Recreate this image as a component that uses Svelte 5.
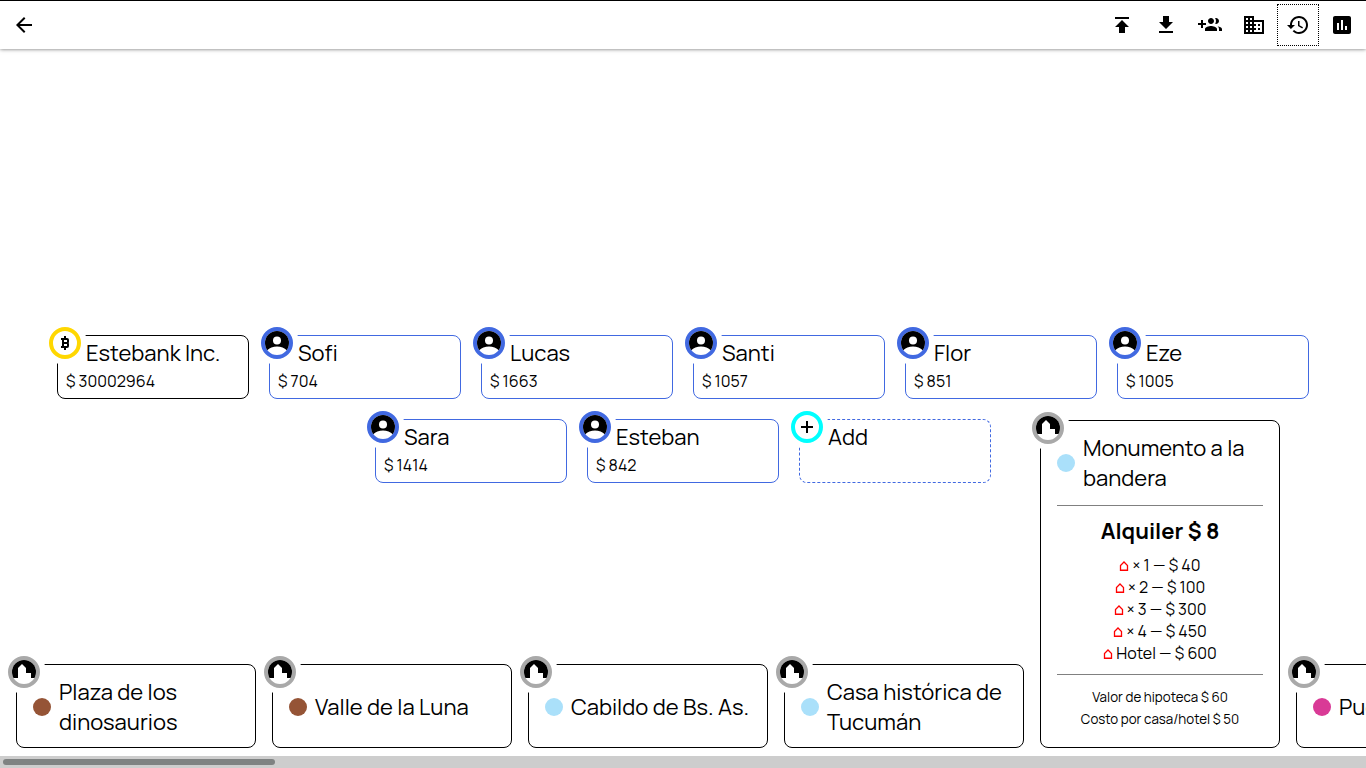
<script>
  const actions = [
    { label: 'Importar', d: 'M5 4v2h14V4H5zm0 10h4v6h6v-6h4l-7-7-7 7z' },
    { label: 'Exportar', d: 'M19 9h-4V3H9v6H5l7 7 7-7zM5 18v2h14v-2H5z' },
    { label: 'Agregar jugadores', d: 'M8 10H5V7H3v3H0v2h3v3h2v-3h3v-2zm10 1c1.66 0 2.99-1.34 2.99-3S19.66 5 18 5c-.32 0-.63.05-.91.14.57.81.9 1.79.9 2.86s-.34 2.04-.9 2.86c.28.09.59.14.91.14zm-5 0c1.66 0 2.99-1.34 2.99-3S14.66 5 13 5c-1.66 0-3 1.34-3 3s1.34 3 3 3zm6.62 2.16c.83.73 1.38 1.66 1.38 2.84v2h3v-2c0-1.54-2.37-2.49-4.38-2.84zM13 13c-2 0-6 1-6 3v2h12v-2c0-2-4-3-6-3z' },
    { label: 'Propiedades', d: 'M12 7V3H2v18h20V7H12zM6 19H4v-2h2v2zm0-4H4v-2h2v2zm0-4H4V9h2v2zm0-4H4V5h2v2zm4 12H8v-2h2v2zm0-4H8v-2h2v2zm0-4H8V9h2v2zm0-4H8V5h2v2zm10 12h-8v-2h2v-2h-2v-2h2v-2h-2V9h8v10zm-2-8h-2v2h2v-2zm0 4h-2v2h2v-2z' },
    { label: 'Historial', current: true, d: 'M13 3c-4.97 0-9 4.03-9 9H1l3.89 3.89.07.14L9 12H6c0-3.87 3.13-7 7-7s7 3.13 7 7-3.13 7-7 7c-1.93 0-3.68-.79-4.94-2.06l-1.42 1.42C8.27 19.99 10.51 21 13 21c4.97 0 9-4.03 9-9s-4.03-9-9-9zm-1 5v5l4.28 2.54.72-1.21-3.5-2.08V8H12z' },
    { label: 'Resumen', d: 'M19 3H5c-1.1 0-2 .9-2 2v14c0 1.1.9 2 2 2h14c1.1 0 2-.9 2-2V5c0-1.1-.9-2-2-2zM9 17H7v-7h2v7zm4 0h-2V7h2v10zm4 0h-2v-4h2v4z' }
  ];

  const players = [
    { name: 'Estebank Inc.', money: 30002964, kind: 'bank' },
    { name: 'Sofi', money: 704, kind: 'person' },
    { name: 'Lucas', money: 1663, kind: 'person' },
    { name: 'Santi', money: 1057, kind: 'person' },
    { name: 'Flor', money: 851, kind: 'person' },
    { name: 'Eze', money: 1005, kind: 'person' },
    { name: 'Sara', money: 1414, kind: 'person' },
    { name: 'Esteban', money: 842, kind: 'person' },
    { name: 'Add', kind: 'add' }
  ];

  const properties = [
    { name: 'Plaza de los dinosaurios', color: 'brown' },
    { name: 'Valle de la Luna', color: 'brown' },
    { name: 'Cabildo de Bs. As.', color: 'sky' },
    { name: 'Casa histórica de Tucumán', color: 'sky' },
    {
      name: 'Monumento a la bandera', color: 'sky',
      rent: 8,
      houses: [['× 1', 40], ['× 2', 100], ['× 3', 300], ['× 4', 450], ['Hotel', 600]],
      mortgage: 60, cost: 50
    },
    { name: 'Puerto Madero', color: 'pink' }
  ];
</script>

<div class="page">
  <header>
    <button class="tool" aria-label="Volver">
      <svg viewBox="0 0 24 24"><path d="M20 11H7.83l5.59-5.59L12 4l-8 8 8 8 1.41-1.41L7.83 13H20v-2z" /></svg>
    </button>
    <nav>
      {#each actions as a}
        <button class="tool" class:current={a.current} aria-label={a.label}>
          <svg viewBox="0 0 24 24"><path d={a.d} /></svg>
        </button>
      {/each}
    </nav>
  </header>

  <main>
    <section class="players">
      {#each players as p}
        <button class="player {p.kind}">
          <span class="badge">
            {#if p.kind === 'person'}
              <svg viewBox="0 0 24 24"><path d="M0 0h24v19.500h-2C19.500 17 16 15.500 12 15.500S4.500 17 2 19.500H0z" /><circle cx="12" cy="9.5" r="4" fill="#fff" /></svg>
            {:else if p.kind === 'bank'}
              <svg viewBox="0 0 24 24"><path fill="none" stroke="#000" stroke-width="2" d="M8 8h6q1 0 1 1v2q0 1-1 1h-4h4q1 0 1 1v2q0 1-1 1H8M10 8v8M12 5v3M12 16v3" /></svg>
            {:else}
              <svg viewBox="0 0 24 24"><path d="M18 13h-5v5h-2v-5H6v-2h5V6h2v5h5v2z" /></svg>
            {/if}
          </span>
          <span class="name">{p.name}</span>
          {#if p.money}<span class="money">$ {p.money}</span>{/if}
        </button>
      {/each}
    </section>

    <section class="dock">
      <div class="strip">
        {#each properties as p}
          <article class="property">
            <span class="badge">
              <svg viewBox="0 0 24 24"><path d="M0 0h24v18h-5v-5h-5V8l-4-4-4 4v10H0z" /></svg>
            </span>
            <h2><i class="dot {p.color}"></i><span>{p.name}</span></h2>
            {#if p.rent}
              <div class="rents">
                <h3>Alquiler $ {p.rent}</h3>
                {#each p.houses as [label, price]}
                  <p><svg class="house" viewBox="0 0 10 10"><path d="M1.500 9.250V4.500L5 1l3.500 3.500v4.750z" /></svg> {label} — $ {price}</p>
                {/each}
              </div>
              <div class="costs">
                <p>Valor de hipoteca $ {p.mortgage}</p>
                <p>Costo por casa/hotel $ {p.cost}</p>
              </div>
            {/if}
          </article>
        {/each}
      </div>
      <div class="track"><div class="thumb"></div></div>
    </section>
  </main>
</div>

<style>
  :global(body) { margin: 0; background: #fff; }
  .page {
    min-height: 100vh;
    display: flex;
    flex-direction: column;
    font-family: Manrope, Inter, sans-serif;
    font-size: 16px;
    color: #000;
  }
  header {
    display: flex;
    justify-content: space-between;
    padding: 2px;
    border-top: 1px solid #000;
    box-shadow: 0 0 4px rgba(0, 0, 0, 0.6);
  }
  nav { display: flex; }
  button {
    font: inherit;
    color: inherit;
    text-align: left;
    background: none;
    border: 0;
    padding: 0;
    cursor: pointer;
  }
  svg { display: block; fill: #000; }
  .tool { padding: 10px; }
  .tool svg { width: 24px; height: 24px; }
  .current { outline: 1px dotted #000; outline-offset: -2px; }

  main { flex: 1; display: grid; grid-template-columns: minmax(0, 1fr); }
  .players {
    grid-area: 1 / 1;
    display: flex;
    flex-wrap: wrap;
    justify-content: center;
    align-content: center;
    gap: 20px;
    padding: 0 48px;
  }
  .player {
    position: relative;
    box-sizing: border-box;
    width: 192px;
    height: 64px;
    display: flex;
    flex-direction: column;
    border: 1px solid #4169e1;
    border-radius: 8px;
    padding: 2px 8px;
  }
  .bank { border-color: #000; }
  .add { border-style: dashed; }
  .name { font-size: 22px; line-height: 30px; padding-left: 20px; }
  .money { line-height: 26px; }
  .badge {
    position: absolute;
    top: -9px;
    left: -9px;
    width: 24px;
    height: 24px;
    border: 4px solid #4169e1;
    border-radius: 50%;
    background: #fff;
    box-shadow: 0 0 0 6px #fff;
  }
  .badge svg { border-radius: 50%; overflow: hidden; }
  .bank .badge { border-color: #ffd700; }
  .add .badge { border-color: #0ff; }

  .dock { grid-area: 1 / 1; align-self: end; pointer-events: none; }
  .strip {
    display: flex;
    align-items: flex-end;
    gap: 16px;
    padding: 16px 16px 8px;
    overflow: hidden;
  }
  .property {
    position: relative;
    flex: none;
    box-sizing: border-box;
    width: 240px;
    padding: 0 16px;
    border: 1px solid #000;
    border-radius: 8px;
    background: #fff;
    pointer-events: auto;
  }
  .property .badge { border-color: #a9a9a9; }
  h2, h3, p { margin: 0; font-weight: 400; }
  h2 {
    display: flex;
    align-items: center;
    gap: 8px;
    min-height: 60px;
    padding: 12px 0 10px;
    font-size: 22px;
    line-height: 30px;
  }
  .dot { flex: none; width: 18px; height: 18px; border-radius: 50%; }
  .brown { background: #955436; }
  .sky { background: #aae0fa; }
  .pink { background: #d93a96; }
  .rents {
    margin-top: 2px;
    border: solid #808080;
    border-width: 1px 0;
    padding: 10px 0;
    text-align: center;
    line-height: 22px;
  }
  h3 { font-size: 22px; font-weight: 700; line-height: 30px; margin-bottom: 8px; }
  .house {
    display: inline-block;
    width: 10px;
    height: 10px;
    fill: none;
    stroke: #f00;
    stroke-width: 1.3;
    vertical-align: baseline;
  }
  .costs { padding: 11px 0 17px; text-align: center; font-size: smaller; line-height: 22px; }
  .track { background: #cdcdcd; padding: 3px; }
  .thumb { width: 20%; height: 6px; border-radius: 3px; background: #7f8282; }
</style>
